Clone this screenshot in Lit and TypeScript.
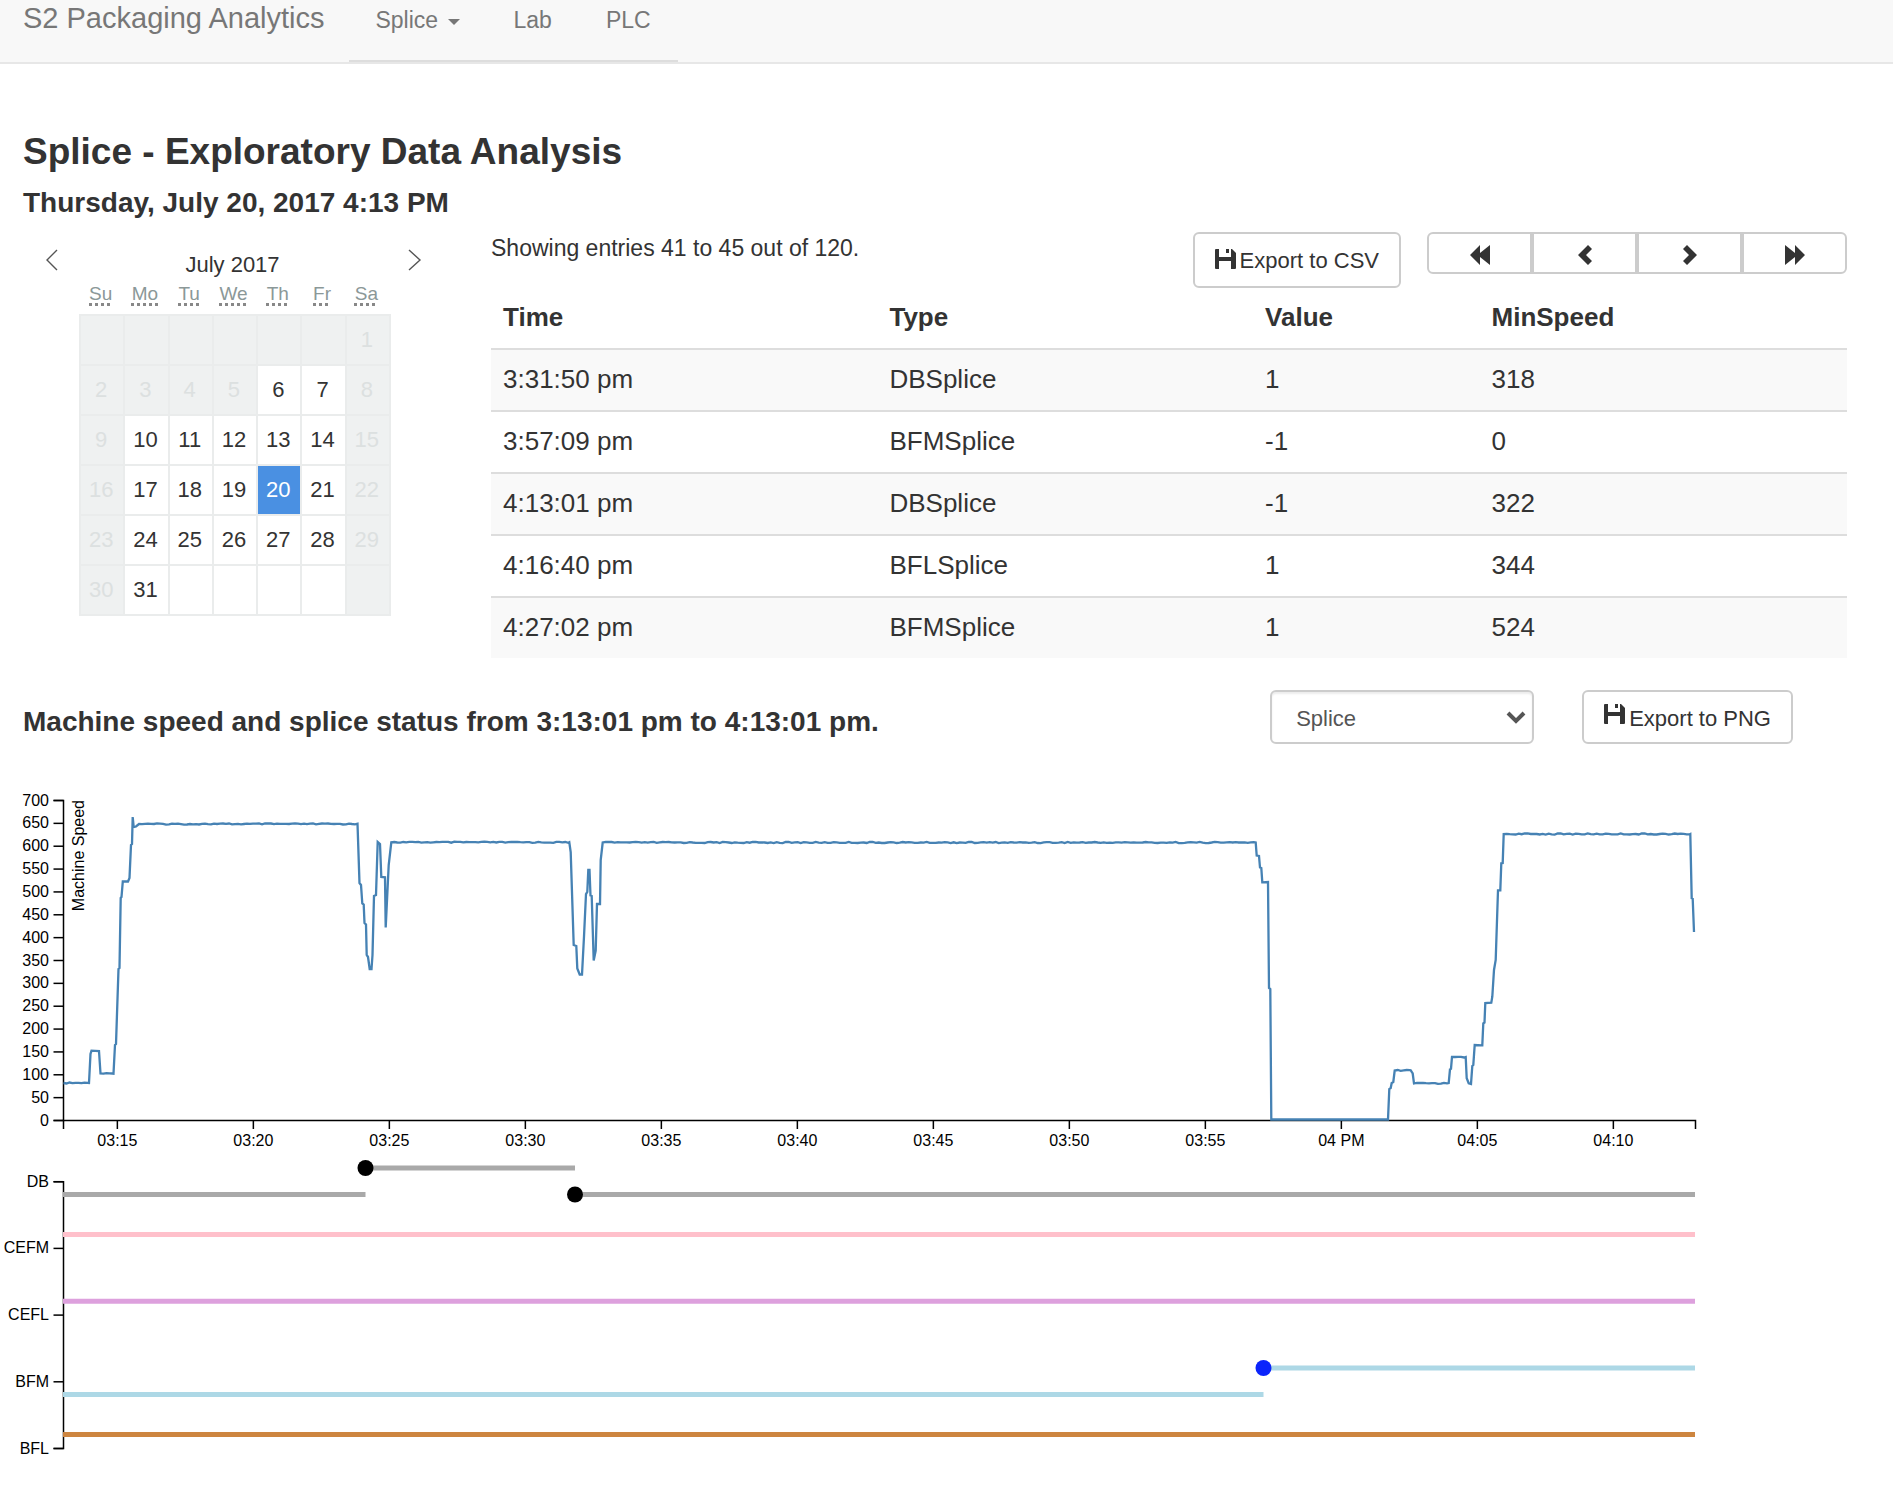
import { LitElement, html, svg, css } from "lit";
import { customElement, state } from "lit/decorators.js";
import { classMap } from "lit/directives/class-map.js";

type Point = [number, number];

const FONT = css`"Helvetica Neue", "Liberation Sans", Arial, sans-serif`;

const entries = [
  ["3:31:50 pm", "DBSplice", "1", "318"],
  ["3:57:09 pm", "BFMSplice", "-1", "0"],
  ["4:13:01 pm", "DBSplice", "-1", "322"],
  ["4:16:40 pm", "BFLSplice", "1", "344"],
  ["4:27:02 pm", "BFMSplice", "1", "524"],
];

const weekdays = [
  ["Su", "Sunday"],
  ["Mo", "Monday"],
  ["Tu", "Tuesday"],
  ["We", "Wednesday"],
  ["Th", "Thursday"],
  ["Fr", "Friday"],
  ["Sa", "Saturday"],
];

const saveIcon = html`<svg class="save" viewBox="0 0 21 21" aria-hidden="true">
  <path fill="currentColor" d="M1 0H4V8H16V0H17L21 4V19Q21 20 20 20H16V12H4V20H1Q0 20 0 19V1Q0 0 1 0ZM11 0H14V4H11Z" />
</svg>`;

@customElement("splice-calendar")
export class SpliceCalendar extends LitElement {
  @state() private selected = 20;

  static styles = css`
    :host {
      display: block;
      font-family: ${FONT};
      color: #333;
    }
    .head {
      display: flex;
      justify-content: space-between;
      padding: 16px 2px 0 20px;
      height: 34px;
    }
    .arrow {
      border: 0;
      background: none;
      padding: 0;
      width: 16px;
      height: 24px;
      color: #555;
    }
    .arrow svg {
      width: 16px;
      height: 24px;
      display: block;
    }
    .month {
      font-size: 22px;
      line-height: 28px;
      padding-top: 3px;
    }
    table {
      margin: 0 33px 0 56px;
      border-collapse: collapse;
      table-layout: fixed;
      width: 312px;
    }
    th {
      height: 33px;
      padding: 0 3px 6px 0;
      box-sizing: border-box;
      font-weight: 400;
      font-size: 19px;
      line-height: 24px;
      color: #8b9898;
      vertical-align: top;
    }
    abbr {
      text-decoration: underline dotted #888 3px;
      text-underline-offset: 3px;
    }
    td {
      height: 50px;
      box-sizing: border-box;
      padding: 0 2px 0 0;
      border: 2px solid #eaecec;
      text-align: center;
      font-size: 22px;
    }
    td.off {
      background: #eff1f1;
      color: #dce0e0;
    }
    td.on {
      background: #4a90e2;
      color: #fff;
    }
    td button {
      border: 0;
      background: none;
      color: inherit;
      font: inherit;
      padding: 0;
      width: 100%;
      height: 46px;
    }
  `;

  private cell(i: number) {
    const day = i - 5;
    const col = i % 7;
    const off = col === 0 || col === 6 || day < 6;
    const label = day >= 1 && day <= 31 ? String(day) : "";
    return html`<td class=${classMap({ off, on: day === this.selected })}>
      ${label && !off ? html`<button @click=${() => (this.selected = day)}>${label}</button>` : label}
    </td>`;
  }

  render() {
    return html`
      <div class="head">
        <button class="arrow" aria-label="Previous month">
          <svg viewBox="0 0 16 24"><path d="M14 2L4 12L14 22" fill="none" stroke="currentColor" stroke-width="1.4" /></svg>
        </button>
        <div class="month">July 2017</div>
        <button class="arrow" aria-label="Next month">
          <svg viewBox="0 0 16 24"><path d="M3 2L14 12L3 22" fill="none" stroke="currentColor" stroke-width="1.4" /></svg>
        </button>
      </div>
      <table>
        <thead>
          <tr>${weekdays.map(([s, l]) => html`<th scope="col"><abbr title=${l}>${s}</abbr></th>`)}</tr>
        </thead>
        <tbody>
          ${[0, 1, 2, 3, 4, 5].map((w) => html`<tr>${weekdays.map((_, d) => this.cell(w * 7 + d))}</tr>`)}
        </tbody>
      </table>
    `;
  }
}

const AXIS_X = 63.5;
const AXIS_END = 1695.5;
const MINUTE = 27.2;
const PLOT_TOP = 800.5;
const PLOT_BOTTOM = 1120.5;

const trace: Point[] = [
  [63.5, 1083], [89, 1083], [90.5, 1054], [91.5, 1050.7], [99, 1051], [100.5, 1073.5], [113.5, 1073.7],
  [115, 1045], [116, 1044], [118.5, 969], [119.5, 968], [120.7, 898], [121.5, 897], [122.8, 881.5],
  [128, 881.5], [129.5, 878], [131, 845], [132, 844], [132.7, 817], [133.7, 827], [136, 826.5], [139, 824],
  [357.5, 823.7], [359.5, 883], [361, 885], [362.3, 903.5], [363.7, 904.5], [364.5, 923], [366, 924.5],
  [366.7, 955], [368, 957], [369.7, 969], [371.5, 969], [372.5, 955], [374, 896], [376, 895], [377.7, 842],
  [380, 844], [381.3, 877], [385, 877.3], [385.7, 927.5], [388.7, 865], [391.3, 842.3], [569.3, 842.3],
  [570.7, 852], [573.7, 945], [576.3, 946], [577.3, 968.5], [579.7, 974.5], [582, 974.5], [584, 936.5],
  [586, 894], [587.3, 892], [588.3, 870], [589.5, 870], [590.5, 895.5], [591.7, 896], [593.7, 960.5],
  [595.7, 950.5], [597, 904], [600, 904], [600.7, 860], [602.7, 842.5], [1255.7, 842.5], [1256.7, 855.5],
  [1259, 856], [1260, 867.5], [1261.3, 868], [1262.3, 882.3], [1268, 882], [1269, 988], [1270.3, 989],
  [1271.3, 1119.5], [1388, 1119.5], [1389.3, 1089], [1390.7, 1088], [1391.7, 1083], [1393.3, 1082],
  [1394.7, 1070.5], [1410.7, 1070.3], [1412.7, 1073.5], [1414, 1083.3], [1448.7, 1083], [1450, 1069.3],
  [1451, 1068.7], [1452, 1057], [1465.7, 1057], [1466.7, 1078.3], [1468.7, 1083.3], [1471, 1084],
  [1472.3, 1066], [1473.3, 1065], [1474.7, 1045], [1482.3, 1045.3], [1483.3, 1023.3], [1484.5, 1022.5],
  [1485.3, 1003], [1491.3, 1002.7], [1492.3, 996.7], [1494, 970], [1495.7, 960], [1498, 890.3],
  [1500.3, 890.3], [1501.3, 863.3], [1502.7, 863], [1503.7, 834], [1690.3, 834], [1691.7, 898.3],
  [1692.7, 898.7], [1694, 932],
];

/* Adds the sensor's small ripple to the long level stretches of a trace. */
function ripple(points: Point[]): string {
  const out: string[] = [];
  points.forEach(([x, y], i) => {
    out.push(`${x},${y}`);
    const next = points[i + 1];
    if (!next || next[0] - x < 12 || y > 1100) return;
    for (let step = 3, n = i + 1; x + step < next[0]; step += 3, n++) {
      const hash = Math.sin(n * 12.9898) * 43758.5453;
      const noise = hash - Math.floor(hash) - 0.5;
      out.push(`${x + step},${y + Math.round(noise * 12) / 10}`);
    }
  });
  return out.join(" ");
}

const timeTicks = ["03:15", "03:20", "03:25", "03:30", "03:35", "03:40", "03:45", "03:50", "03:55", "04 PM", "04:05", "04:10"];
const speedTicks = Array.from({ length: 15 }, (_, i) => i * 50);

const lanes = ["DB", "CEFM", "CEFL", "BFM", "BFL"];
const laneY = (i: number) => 1181.7 + i * 66.7;

const statusBars = [
  { x1: 63, x2: 365.5, y: 1194.5, color: "darkgray" },
  { x1: 365.5, x2: 575, y: 1168, color: "darkgray" },
  { x1: 575, x2: 1695, y: 1194.5, color: "darkgray" },
  { x1: 63, x2: 1695, y: 1234.5, color: "pink" },
  { x1: 63, x2: 1695, y: 1301.3, color: "plum" },
  { x1: 63, x2: 1263.5, y: 1394.5, color: "lightblue" },
  { x1: 1263.5, x2: 1695, y: 1368, color: "lightblue" },
  { x1: 63, x2: 1695, y: 1434.5, color: "peru" },
];

const events = [
  { x: 365.5, y: 1168, color: "black" },
  { x: 575, y: 1194.5, color: "black" },
  { x: 1263.5, y: 1368, color: "#0b24fb" },
];

@customElement("speed-chart")
export class SpeedChart extends LitElement {
  static styles = css`
    :host {
      display: block;
    }
    svg {
      display: block;
      width: 100%;
      height: auto;
      font-family: ${FONT};
      font-size: 16px;
    }
    .axis {
      fill: none;
      stroke: #000;
      stroke-width: 1.5;
    }
    .end {
      text-anchor: end;
    }
    .mid {
      text-anchor: middle;
    }
    .trace {
      fill: none;
      stroke: steelblue;
      stroke-width: 2.3;
    }
    .bar {
      stroke-width: 5;
    }
  `;

  render() {
    const speedY = (v: number) => PLOT_BOTTOM - (v * (PLOT_BOTTOM - PLOT_TOP)) / 700;
    const timeX = (i: number) => AXIS_X + MINUTE * (1.98 + i * 5);
    return html`<svg viewBox="0 780 1893 690" role="img" aria-label="Machine speed and splice status">
      <path class="axis" d="M53.5 ${PLOT_TOP}H${AXIS_X}V${PLOT_BOTTOM}H53.5" />
      ${speedTicks.map(
        (v) => svg`<path class="axis" d="M53.5 ${speedY(v)}H${AXIS_X}" />
          <text class="end" x="49" y=${speedY(v) + 5}>${v}</text>`,
      )}
      <text class="end" transform="translate(84 800) rotate(-90)">Machine Speed</text>
      <path class="axis" d="M${AXIS_X} 1129V${PLOT_BOTTOM}H${AXIS_END}V1129" />
      ${timeTicks.map(
        (t, i) => svg`<path class="axis" d="M${timeX(i)} ${PLOT_BOTTOM}V1129" />
          <text class="mid" x=${timeX(i)} y="1146">${t}</text>`,
      )}
      <polyline class="trace" points=${ripple(trace)} />
      <path class="axis" d="M53.5 ${laneY(0)}H${AXIS_X}V${laneY(4)}H53.5" />
      ${lanes.map(
        (name, i) => svg`<path class="axis" d="M53.5 ${laneY(i)}H${AXIS_X}" />
          <text class="end" x="49" y=${laneY(i) + 5}>${name}</text>`,
      )}
      ${statusBars.map((b) => svg`<line class="bar" x1=${b.x1} x2=${b.x2} y1=${b.y} y2=${b.y} stroke=${b.color} />`)}
      ${events.map((e) => svg`<circle cx=${e.x} cy=${e.y} r="8" fill=${e.color} />`)}
    </svg>`;
  }
}

@customElement("app-root")
export class AppRoot extends LitElement {
  static styles = css`
    :host {
      display: block;
      background: #fff;
      color: #333;
      font-family: ${FONT};
      font-size: 22px;
    }
    nav {
      display: flex;
      height: 62px;
      padding-left: 23px;
      background: #f8f8f8;
      border-bottom: 2px solid #e7e7e7;
    }
    nav a {
      color: #777;
      text-decoration: none;
    }
    .brand {
      font-size: 29px;
      line-height: 36px;
    }
    .links {
      display: flex;
      gap: 54px;
      margin: 0 0 0 25px;
      padding: 0 27px 0 26px;
      list-style: none;
      border-bottom: 2px solid #ddd;
      font-size: 23px;
      line-height: 40px;
    }
    .caret {
      display: inline-block;
      margin-left: 3px;
      vertical-align: middle;
      border-top: 6px solid #777;
      border-left: 6px solid transparent;
      border-right: 6px solid transparent;
    }
    h1,
    h2,
    h3 {
      margin: 0;
      font-weight: 700;
    }
    h1 {
      padding: 66px 23px 0;
      font-size: 37px;
      line-height: 44px;
    }
    h2 {
      padding: 13px 23px 0;
      font-size: 28px;
      line-height: 32px;
    }
    h3 {
      flex: 1;
      padding-top: 10px;
      font-size: 28px;
      line-height: 32px;
    }
    .top {
      display: grid;
      grid-template-columns: 401px 1fr;
      gap: 67px;
      padding: 13px 46px 0 23px;
    }
    .tools {
      display: flex;
      align-items: flex-start;
      height: 56px;
    }
    .count {
      flex: 1;
      margin: 0;
      font-size: 23px;
      line-height: 32px;
    }
    .btn {
      display: flex;
      align-items: center;
      box-sizing: border-box;
      height: 56px;
      padding: 2px 20px 0;
      border: 2px solid #ccc;
      border-radius: 6px;
      background: #fff;
      color: #333;
      font: inherit;
    }
    .save {
      width: 21px;
      height: 21px;
      margin: 0 4px 4px 0;
    }
    .pager {
      display: flex;
      width: 420px;
      margin-left: 26px;
    }
    .pager button {
      flex: 1;
      display: flex;
      align-items: center;
      justify-content: center;
      box-sizing: border-box;
      height: 42px;
      padding: 4px 0 0;
      border: 2px solid #ccc;
      background: #fff;
      color: #333;
    }
    .pager button:first-child {
      border-radius: 6px 0 0 6px;
    }
    .pager button:last-child {
      border-radius: 0 6px 6px 0;
    }
    .pager svg {
      width: 20px;
      height: 20px;
    }
    .entries {
      width: 100%;
      border-collapse: collapse;
      table-layout: fixed;
      font-size: 26px;
      line-height: 36px;
      text-align: left;
    }
    .entries th,
    .entries td {
      box-sizing: border-box;
      padding: 11px 12px 13px;
    }
    .entries td {
      border-top: 2px solid #ddd;
    }
    .entries tbody tr:nth-child(odd) {
      background: #f9f9f9;
    }
    .c1 {
      width: 28.5%;
    }
    .c2 {
      width: 27.7%;
    }
    .c3 {
      width: 16.7%;
    }
    .chart-head {
      display: flex;
      align-items: center;
      padding: 32px 100px 36px 23px;
    }
    .pick {
      display: grid;
      align-items: center;
      width: 264px;
      margin-right: 48px;
    }
    .pick select,
    .pick svg {
      grid-area: 1 / 1;
    }
    .pick select {
      appearance: none;
      box-sizing: border-box;
      width: 100%;
      height: 54px;
      padding: 2px 24px 0;
      border: 2px solid #ccc;
      border-radius: 6px;
      background: #fff;
      box-shadow: inset 0 2px 2px rgba(0, 0, 0, 0.08);
      color: #555;
      font: inherit;
    }
    .pick svg {
      justify-self: end;
      width: 20px;
      height: 14px;
      margin-right: 8px;
      pointer-events: none;
    }
    .chart-head .btn {
      height: 54px;
      padding-top: 4px;
    }
    .chart-head .save {
      margin-bottom: 10px;
    }
  `;

  render() {
    return html`
      <nav>
        <a class="brand" href="#">S2 Packaging Analytics</a>
        <ul class="links">
          <li><a href="#splice">Splice <span class="caret"></span></a></li>
          <li><a href="#lab">Lab</a></li>
          <li><a href="#plc">PLC</a></li>
        </ul>
      </nav>
      <h1>Splice - Exploratory Data Analysis</h1>
      <h2>Thursday, July 20, 2017 4:13 PM</h2>
      <section class="top">
        <splice-calendar></splice-calendar>
        <div>
          <div class="tools">
            <p class="count">Showing entries 41 to 45 out of 120.</p>
            <button class="btn">${saveIcon}Export to CSV</button>
            <div class="pager">
              <button aria-label="First page">
                <svg viewBox="0 0 20 20"><path fill="currentColor" d="M0 10L10 0V8L20 0V20L10 12V20Z" /></svg>
              </button>
              <button aria-label="Previous page">
                <svg viewBox="0 0 20 20"><path fill="currentColor" d="M3 10L13 0L17 4L11 10L17 16L13 20Z" /></svg>
              </button>
              <button aria-label="Next page">
                <svg viewBox="0 0 20 20"><path fill="currentColor" d="M17 10L7 0L3 4L9 10L3 16L7 20Z" /></svg>
              </button>
              <button aria-label="Last page">
                <svg viewBox="0 0 20 20"><path fill="currentColor" d="M20 10L10 0V8L0 0V20L10 12V20Z" /></svg>
              </button>
            </div>
          </div>
          <table class="entries">
            <thead>
              <tr>
                <th class="c1" scope="col">Time</th>
                <th class="c2" scope="col">Type</th>
                <th class="c3" scope="col">Value</th>
                <th scope="col">MinSpeed</th>
              </tr>
            </thead>
            <tbody>
              ${entries.map((row) => html`<tr>${row.map((value) => html`<td>${value}</td>`)}</tr>`)}
            </tbody>
          </table>
        </div>
      </section>
      <section>
        <div class="chart-head">
          <h3>Machine speed and splice status from 3:13:01 pm to 4:13:01 pm.</h3>
          <div class="pick">
            <select aria-label="Series">
              <option>Splice</option>
            </select>
            <svg viewBox="0 0 20 14" aria-hidden="true"><path d="M2 3L10 11L18 3" fill="none" stroke="#555" stroke-width="4" /></svg>
          </div>
          <button class="btn">${saveIcon}Export to PNG</button>
        </div>
        <speed-chart></speed-chart>
      </section>
    `;
  }
}
